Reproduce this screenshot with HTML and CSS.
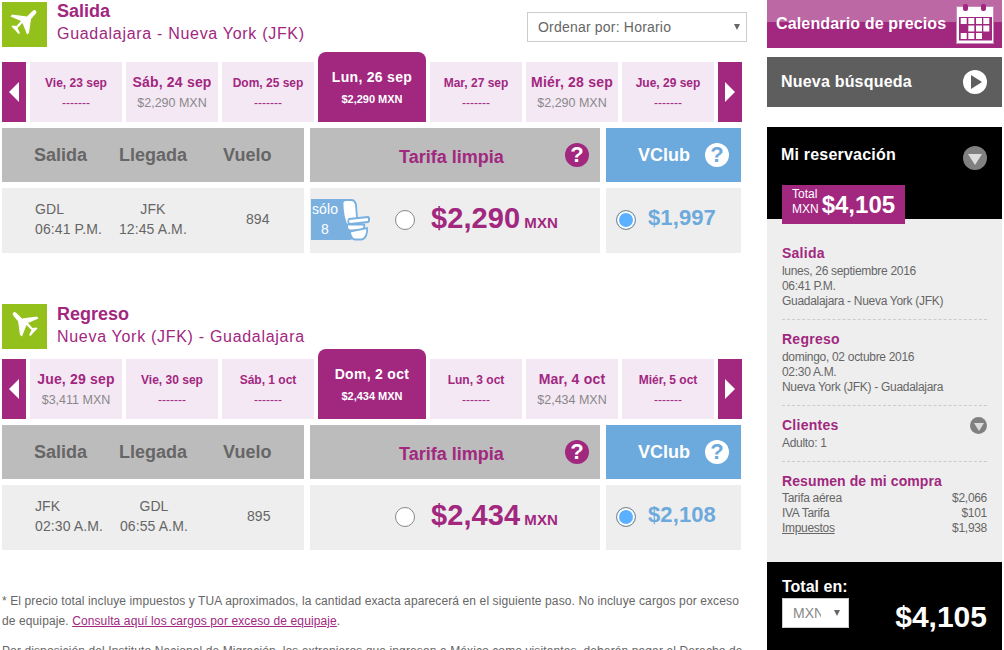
FILE: index.html
```html
<!DOCTYPE html>
<html lang="es">
<head>
    <meta charset="UTF-8">
    <title>Selecciona tu vuelo</title>
    <link rel="stylesheet" href="styles.css">
</head>
<body>

    <svg class="defs" width="0" height="0">
        <symbol id="plane" viewBox="0 0 45 45">
            <path d="M33.500 8.500L34.500 10C34.500 11 30 16 29 17L27 31 25 32.500 20.500 21 15.500 26 18 31 16.500 32 13 28 9.500 24.500 10.500 23.500 14.500 24 19 19 8.500 14.500 10 12.500 25 14.500 30 9.500C31.500 8 33 7.500 33.500 8.500Z" fill="#fff"/>
        </symbol>
        <symbol id="seat" viewBox="0 0 30 42">
            <path d="M1.500 4C1.500 2 3 1 5 1L10 1C13 1 14.500 3 15 6L16 19 14 27 6 27C3 20 1.500 10 1.500 4Z" fill="#fff" stroke="#7ab0e0" stroke-width="1.800"/>
            <path d="M8 20L27 18C28.500 18 28.500 23 27 23L9 25C7 25 7 20.500 8 20Z" fill="#fff" stroke="#7ab0e0" stroke-width="1.800"/>
            <path d="M6 25.500H23C24 25.500 23 31 20 31.500H9C7 31.500 6 28 6 25.500Z" fill="#fff" stroke="#7ab0e0" stroke-width="1.800"/>
            <path d="M9 32.500L26 29C27 35 24 40.500 20 40.500H14C11 40.500 9 36 9 32.500Z" fill="#fff" stroke="#7ab0e0" stroke-width="1.800"/>
        </symbol>
    </svg>

    <div class="page">
        <main class="vuelos">

            <section class="tramo">
                <div class="tramo-head">
                    <div class="plane-box"><svg class="plane"><use href="#plane"/></svg></div>
                    <div class="tramo-title">
                        <h2>Salida</h2>
                        <p>Guadalajara - Nueva York (JFK)</p>
                    </div>
                    <div class="select-box orden">
                        <select><option>Ordenar por: Horario</option></select>
                    </div>
                </div>

                <div class="dias">
                    <a class="flecha"><span class="tri-left"></span></a>
                    <div class="dia"><b>Vie, 23 sep</b><span class="nada">-------</span></div>
                    <div class="dia con-precio"><b>Sáb, 24 sep</b><span>$2,290 MXN</span></div>
                    <div class="dia"><b>Dom, 25 sep</b><span class="nada">-------</span></div>
                    <div class="dia activo"><b>Lun, 26 sep</b><span>$2,290 MXN</span></div>
                    <div class="dia"><b>Mar, 27 sep</b><span class="nada">-------</span></div>
                    <div class="dia con-precio"><b>Miér, 28 sep</b><span>$2,290 MXN</span></div>
                    <div class="dia"><b>Jue, 29 sep</b><span class="nada">-------</span></div>
                    <a class="flecha"><span class="tri-right"></span></a>
                </div>

                <div class="fila cabecera">
                    <div class="col-vuelo">
                        <span>Salida</span><span class="t-lleg">Llegada</span><span class="t-num">Vuelo</span>
                    </div>
                    <div class="col-limpia">
                        <span class="t-limpia">Tarifa limpia</span>
                        <span class="ayuda purple">?</span>
                    </div>
                    <div class="col-club">
                        <span class="t-club">VClub</span>
                        <span class="ayuda white">?</span>
                    </div>
                </div>

                <div class="fila datos">
                    <div class="col-vuelo">
                        <div>GDL<br>06:41 P.M.</div>
                        <div class="d-lleg">JFK<br>12:45 A.M.</div>
                        <div class="d-num">894</div>
                    </div>
                    <div class="col-limpia">
                        <div class="solo">
                            <span class="solo-txt">sólo<br>8</span>
                            <svg class="seat"><use href="#seat"/></svg>
                        </div>
                        <span class="radio"></span>
                        <span class="precio">$2,290</span><span class="moneda">MXN</span>
                    </div>
                    <div class="col-club">
                        <span class="radio on"></span>
                        <span class="precio-club">$1,997</span>
                    </div>
                </div>
            </section>

            <section class="tramo regreso">
                <div class="tramo-head">
                    <div class="plane-box"><svg class="plane back"><use href="#plane"/></svg></div>
                    <div class="tramo-title">
                        <h2>Regreso</h2>
                        <p>Nueva York (JFK) - Guadalajara</p>
                    </div>
                </div>

                <div class="dias">
                    <a class="flecha"><span class="tri-left"></span></a>
                    <div class="dia con-precio"><b>Jue, 29 sep</b><span>$3,411 MXN</span></div>
                    <div class="dia"><b>Vie, 30 sep</b><span class="nada">-------</span></div>
                    <div class="dia"><b>Sáb, 1 oct</b><span class="nada">-------</span></div>
                    <div class="dia activo"><b>Dom, 2 oct</b><span>$2,434 MXN</span></div>
                    <div class="dia"><b>Lun, 3 oct</b><span class="nada">-------</span></div>
                    <div class="dia con-precio"><b>Mar, 4 oct</b><span>$2,434 MXN</span></div>
                    <div class="dia"><b>Miér, 5 oct</b><span class="nada">-------</span></div>
                    <a class="flecha"><span class="tri-right"></span></a>
                </div>

                <div class="fila cabecera">
                    <div class="col-vuelo">
                        <span>Salida</span><span class="t-lleg">Llegada</span><span class="t-num">Vuelo</span>
                    </div>
                    <div class="col-limpia">
                        <span class="t-limpia">Tarifa limpia</span>
                        <span class="ayuda purple">?</span>
                    </div>
                    <div class="col-club">
                        <span class="t-club">VClub</span>
                        <span class="ayuda white">?</span>
                    </div>
                </div>

                <div class="fila datos">
                    <div class="col-vuelo">
                        <div>JFK<br>02:30 A.M.</div>
                        <div class="d-lleg">GDL<br>06:55 A.M.</div>
                        <div class="d-num">895</div>
                    </div>
                    <div class="col-limpia">
                        <span class="radio"></span>
                        <span class="precio">$2,434</span><span class="moneda">MXN</span>
                    </div>
                    <div class="col-club">
                        <span class="radio on"></span>
                        <span class="precio-club">$2,108</span>
                    </div>
                </div>
            </section>

            <div class="notas">
                <p>* El precio total incluye impuestos y TUA aproximados, la cantidad exacta aparecerá en el siguiente paso. No incluye cargos por exceso de equipaje. <a href="#">Consulta aquí los cargos por exceso de equipaje</a>.</p>
                <p>Por disposición del Instituto Nacional de Migración, los extranjeros que ingresan a México como visitantes, deberán pagar el Derecho de</p>
            </div>
        </main>

        <aside class="lateral">
            <a class="btn-calendario">
                <span>Calendario de precios</span>
                <svg class="cal" viewBox="0 0 40 42">
                    <rect x="1.500" y="2.500" width="37" height="37" fill="#fff" stroke="#c98ab8" stroke-width="1"/>
                    <rect x="4" y="13" width="33" height="23.500" fill="#a1277f"/>
                    <rect x="8" y="0" width="5" height="7" rx="2" fill="#a1277f"/>
                    <rect x="26" y="0" width="5" height="7" rx="2" fill="#a1277f"/>
                    <g fill="#fff">
                        <rect x="5.700" y="14" width="6" height="6"/><rect x="13.300" y="14" width="6" height="6"/><rect x="21" y="14" width="6" height="6"/><rect x="28.300" y="14" width="6" height="6"/>
                        <rect x="13.300" y="21.500" width="6" height="6"/><rect x="21" y="21.500" width="6" height="6"/><rect x="28.300" y="21.500" width="6" height="6"/>
                        <rect x="5.700" y="29" width="6" height="6"/><rect x="13.300" y="29" width="6" height="6"/><rect x="21" y="29" width="6" height="6"/>
                    </g>
                </svg>
            </a>
            <a class="btn-nueva">
                <span>Nueva búsqueda</span>
                <span class="circulo blanco"><span class="tri-play"></span></span>
            </a>

            <div class="reserva-head">
                <div class="reserva-top">
                    <span>Mi reservación</span>
                    <span class="circulo gris"><span class="tri-down"></span></span>
                </div>
                <div class="total-tag">
                    <span class="total-lbl">Total<br>MXN</span>
                    <span class="total-num">$4,105</span>
                </div>
            </div>

            <div class="resumen">
                <div class="bloque">
                    <h3>Salida</h3>
                    <p>lunes, 26 septiembre 2016<br>06:41 P.M.<br>Guadalajara - Nueva York (JFK)</p>
                </div>
                <div class="bloque">
                    <h3>Regreso</h3>
                    <p>domingo, 02 octubre 2016<br>02:30 A.M.<br>Nueva York (JFK) - Guadalajara</p>
                </div>
                <div class="bloque">
                    <div class="bloque-head">
                        <h3>Clientes</h3>
                        <span class="circulo gris chico"><span class="tri-down"></span></span>
                    </div>
                    <p>Adulto: 1</p>
                </div>
                <div class="bloque compra">
                    <h3>Resumen de mi compra</h3>
                    <div class="linea"><span>Tarifa aérea</span><span>$2,066</span></div>
                    <div class="linea"><span>IVA Tarifa</span><span>$101</span></div>
                    <div class="linea"><a href="#">Impuestos</a><span>$1,938</span></div>
                </div>
            </div>

            <div class="total-en">
                <div class="total-izq">
                    <span class="total-en-lbl">Total en:</span>
                    <div class="select-box moneda-sel">
                        <select><option>MXN</option></select>
                    </div>
                </div>
                <span class="total-grande">$4,105</span>
            </div>
        </aside>
    </div>

</body>
</html>
```

FILE: styles.css
```css
html, body {
    margin: 0;
    height: 650px;
    overflow: hidden;
    background-color: #fff;
    font-family: "Liberation Sans", Arial, sans-serif;
    color: #666;
}

.defs {
    position: absolute;
}

.page {
    display: flex;
    padding-left: 2px;
}

.vuelos {
    width: 745px;
    flex: none;
}

/* Cabecera de cada tramo */
.tramo-head {
    display: flex;
    padding-top: 2px;
    height: 45px;
}

.regreso {
    margin-top: 49px;
}

.plane-box {
    width: 45px;
    height: 45px;
    background-color: #93c01a;
}

.plane {
    display: block;
    width: 45px;
    height: 45px;
}

.plane.back {
    transform: scaleX(-1);
}

.tramo-title {
    margin-left: 10px;
    color: #a1277f;
    flex: 1;
}

.tramo-title h2 {
    margin: -2px 0 0;
    font-size: 18px;
    line-height: 22px;
}

.tramo-title p {
    margin: 1px 0 0;
    font-size: 16px;
    letter-spacing: 0.7px;
    line-height: 22px;
}

.regreso .tramo-title h2 {
    margin-top: -1px;
}

.select-box {
    position: relative;
    background-color: #fff;
    border: 1px solid #ccc;
    box-sizing: border-box;
}

.select-box select {
    appearance: none;
    border: none;
    background: transparent;
    width: 100%;
    height: 100%;
    font-family: inherit;
    color: #666;
    outline: none;
}

.select-box::after {
    content: "";
    position: absolute;
    top: 50%;
    margin-top: -3px;
    border-left: 3px solid transparent;
    border-right: 3px solid transparent;
    border-top: 6px solid #666;
}

.orden {
    width: 220px;
    height: 30px;
    margin-top: 10px;
}

.orden select {
    font-size: 14px;
    letter-spacing: 0.2px;
    padding: 0 20px 0 10px;
}

.orden::after {
    right: 6px;
}

/* Tira de fechas */
.dias {
    display: flex;
    align-items: flex-end;
    gap: 4px;
    height: 70px;
    margin-top: 5px;
    width: 740px;
}

.regreso .dias {
    margin-top: 0;
}

.flecha {
    width: 24px;
    height: 60px;
    background-color: #a1277f;
    display: flex;
    justify-content: center;
    align-items: center;
}

.tri-left, .tri-right {
    width: 0;
    height: 0;
    border-top: 10px solid transparent;
    border-bottom: 10px solid transparent;
}

.tri-left {
    border-right: 10px solid #fff;
}

.tri-right {
    border-left: 10px solid #fff;
}

.dia {
    width: 92px;
    height: 60px;
    box-sizing: border-box;
    padding-top: 13px;
    background-color: #f5e8f5;
    text-align: center;
    color: #a1277f;
    display: flex;
    flex-direction: column;
}

.dia b {
    font-size: 12px;
    line-height: 16px;
}

.dia span {
    font-size: 14px;
    line-height: 20px;
    margin-top: 2px;
}

.dia .nada {
    color: #a1277f;
    font-size: 12px;
}

.dia.con-precio {
    padding-top: 12px;
}

.dia.con-precio b {
    font-size: 14px;
    letter-spacing: 0.2px;
}

.dia.con-precio span {
    color: #888;
    font-size: 12.500px;
    margin-top: 3px;
}

.dia.activo {
    width: 108px;
    height: 70px;
    background-color: #a1277f;
    border-radius: 8px 8px 0 0;
    color: #fff;
    padding-top: 17px;
}

.dia.activo b {
    font-size: 14px;
    letter-spacing: 0.3px;
}

.dia.activo span {
    font-size: 11px;
    line-height: 16px;
    margin-top: 6px;
    font-weight: bold;
}

/* Filas de la tabla */
.fila {
    display: flex;
}

.col-vuelo {
    width: 302px;
    display: flex;
    box-sizing: border-box;
    padding-left: 32px;
}

.col-limpia {
    width: 290px;
    margin-left: 6px;
    display: flex;
    align-items: center;
    position: relative;
}

.col-club {
    width: 135px;
    margin-left: 6px;
    display: flex;
    align-items: center;
    position: relative;
}

.cabecera {
    margin-top: 6px;
    height: 54px;
    font-weight: bold;
    font-size: 18px;
}

.cabecera .col-vuelo, .cabecera .col-limpia {
    background-color: #bcbcbc;
}

.cabecera .col-vuelo {
    align-items: center;
    line-height: 54px;
}

.t-lleg {
    margin-left: 32px;
}

.t-num {
    margin-left: 36px;
}

.t-limpia {
    color: #a1277f;
    margin-left: 89px;
    margin-top: 4px;
}

.cabecera .col-club {
    background-color: #6ca9dc;
}

.t-club {
    color: #fff;
    margin-left: 32px;
}

.ayuda {
    position: absolute;
    top: 15px;
    width: 24px;
    height: 24px;
    border-radius: 50%;
    text-align: center;
    font-size: 22px;
    line-height: 24px;
    font-weight: bold;
}

.ayuda.purple {
    background-color: #a1277f;
    color: #fff;
    right: 11px;
}

.ayuda.white {
    background-color: #fff;
    color: #6ca9dc;
    right: 12px;
}

.datos {
    margin-top: 6px;
    height: 65px;
    font-size: 14px;
    letter-spacing: 0.1px;
    line-height: 20px;
}

.datos .col-vuelo, .datos .col-limpia, .datos .col-club {
    background-color: #eee;
}

.datos .col-vuelo {
    padding-top: 11px;
    padding-left: 33px;
}

.d-lleg {
    width: 86px;
    margin-left: 8px;
    text-align: center;
}

.d-num {
    margin-left: 50px;
    padding-top: 10px;
}

.radio {
    width: 20px;
    height: 20px;
    flex: none;
    box-sizing: border-box;
    border: 1px solid #888;
    border-radius: 50%;
    background-color: #fff;
    margin-left: 85px;
    margin-top: -1px;
}

.col-club .radio {
    margin-left: 10px;
}

.radio.on {
    background-color: #5bb0ff;
    box-shadow: inset 0 0 0 2px #fff;
}

.precio {
    margin-left: 16px;
    margin-top: -6px;
    font-size: 29px;
    font-weight: bold;
    color: #a1277f;
}

.moneda {
    margin-left: 4px;
    margin-top: 4px;
    font-size: 15px;
    font-weight: bold;
    color: #a1277f;
}

.precio-club {
    margin-left: 12px;
    margin-top: -6px;
    font-size: 22px;
    font-weight: bold;
    color: #6ca9dc;
}

/* Aviso de asientos */
.solo {
    position: absolute;
    left: 1px;
    top: 11px;
    width: 46px;
    height: 41px;
    background-color: #7ab0e0;
    border-radius: 0 8px 8px 0;
}

.solo-txt {
    display: block;
    color: #fff;
    font-size: 14px;
    line-height: 20px;
    width: 28px;
    text-align: center;
}

.seat {
    position: absolute;
    left: 30px;
    top: 0;
    width: 30px;
    height: 42px;
}

/* Notas al pie */
.notas {
    margin-top: 41px;
    width: 745px;
    font-size: 12px;
    letter-spacing: 0.11px;
    line-height: 20px;
    color: #666;
}

.notas p {
    margin: 0 0 10px;
}

.notas a {
    color: #a1277f;
}

/* Columna lateral */
.lateral {
    width: 235px;
    margin-left: 20px;
    flex: none;
}

.btn-calendario {
    display: flex;
    align-items: center;
    justify-content: space-between;
    height: 48px;
    background: linear-gradient(#bc68a4 0, #bc68a4 22px, #a1277f 22px);
    color: #fff;
    font-weight: bold;
    font-size: 16px;
    letter-spacing: 0.15px;
    padding: 0 7px 0 9px;
    box-sizing: border-box;
}

.cal {
    width: 40px;
    height: 42px;
    margin-top: 2px;
}

.btn-nueva {
    display: flex;
    align-items: center;
    justify-content: space-between;
    height: 50px;
    margin-top: 9px;
    background-color: #5e5e5e;
    color: #fff;
    font-weight: bold;
    font-size: 16px;
    letter-spacing: 0.2px;
    padding: 0 15px 0 14px;
}

.circulo {
    width: 24px;
    height: 24px;
    border-radius: 50%;
    display: flex;
    justify-content: center;
    align-items: center;
}

.circulo.blanco {
    background-color: #fff;
}

.circulo.gris {
    background-color: #808080;
}

.circulo.chico {
    width: 17px;
    height: 17px;
}

.tri-play {
    margin-left: 3px;
    border-top: 7px solid transparent;
    border-bottom: 7px solid transparent;
    border-left: 11px solid #5e5e5e;
}

.tri-down {
    margin-top: 3px;
    border-left: 7px solid transparent;
    border-right: 7px solid transparent;
    border-top: 11px solid #ddd;
}

.chico .tri-down {
    margin-top: 2px;
    border-left-width: 5px;
    border-right-width: 5px;
    border-top-width: 8px;
}

.reserva-head {
    margin-top: 20px;
    height: 92px;
    background-color: #000;
    position: relative;
}

.reserva-top {
    display: flex;
    justify-content: space-between;
    color: #fff;
    font-weight: bold;
    font-size: 16px;
    letter-spacing: 0.2px;
    padding: 19px 15px 0 14px;
}

.total-tag {
    position: absolute;
    left: 15px;
    top: 58px;
    height: 39px;
    width: 123px;
    background-color: #a1277f;
    color: #fff;
    display: flex;
    box-sizing: border-box;
    padding-left: 10px;
    z-index: 1;
}

.total-lbl {
    font-size: 12px;
    line-height: 15px;
    padding-top: 2px;
}

.total-num {
    font-size: 24px;
    font-weight: bold;
    line-height: 39px;
    margin-left: 3px;
}

.resumen {
    height: 343px;
    background-color: #eee;
    box-sizing: border-box;
    padding: 26px 15px 0;
    font-size: 12px;
    line-height: 15px;
}

.bloque {
    border-bottom: 1px dashed #ccc;
    padding-bottom: 10px;
    margin-bottom: 11px;
}

.bloque.compra {
    border: none;
}

.bloque h3 {
    margin: 0;
    font-size: 14px;
    line-height: 17px;
    color: #a1277f;
    letter-spacing: 0.25px;
}

.bloque.compra h3 {
    letter-spacing: 0.1px;
    margin-bottom: 1px;
}

.bloque p {
    margin: 2px 0 0;
    letter-spacing: -0.3px;
}

.bloque-head {
    display: flex;
    justify-content: space-between;
}

.linea {
    display: flex;
    justify-content: space-between;
    letter-spacing: -0.3px;
}

.linea a {
    color: #666;
}

.total-en {
    height: 88px;
    background-color: #000;
    color: #fff;
    display: flex;
    justify-content: space-between;
    box-sizing: border-box;
    padding: 16px 15px 0;
}

.total-en-lbl {
    display: block;
    font-size: 16px;
    font-weight: bold;
    line-height: 18px;
}

.moneda-sel {
    width: 67px;
    height: 30px;
    margin-top: 2px;
    background-color: #fff;
}

.moneda-sel select {
    font-size: 14px;
    color: #888;
    padding: 0 27px 0 10px;
}

.moneda-sel::after {
    right: 8px;
}

.total-grande {
    font-size: 30px;
    font-weight: bold;
    margin-top: 22px;
}
```
